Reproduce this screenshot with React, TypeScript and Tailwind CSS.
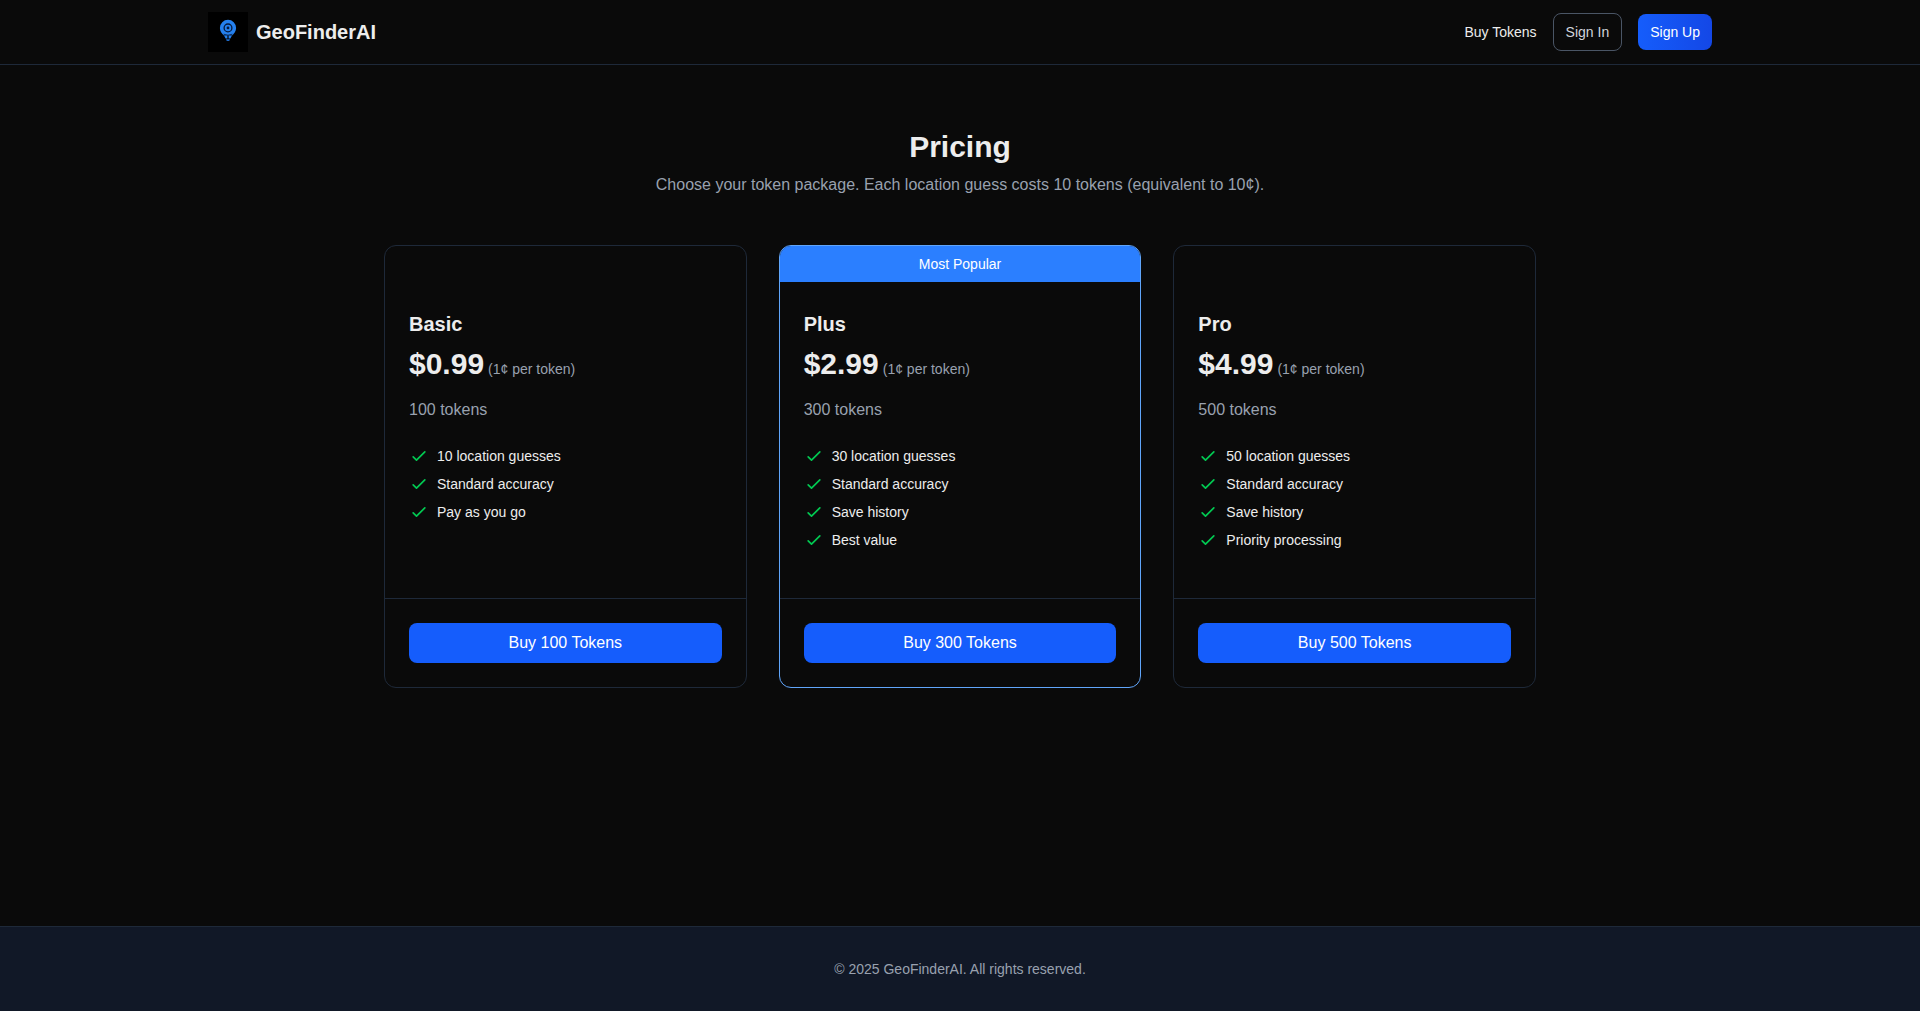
type Plan = {
  name: string;
  price: string;
  tokens: number;
  features: string[];
  popular?: boolean;
};

const plans: Plan[] = [
  {
    name: "Basic",
    price: "$0.99",
    tokens: 100,
    features: ["10 location guesses", "Standard accuracy", "Pay as you go"],
  },
  {
    name: "Plus",
    price: "$2.99",
    tokens: 300,
    features: ["30 location guesses", "Standard accuracy", "Save history", "Best value"],
    popular: true,
  },
  {
    name: "Pro",
    price: "$4.99",
    tokens: 500,
    features: ["50 location guesses", "Standard accuracy", "Save history", "Priority processing"],
  },
];

function Logo() {
  return (
    <svg viewBox="0 0 40 40" className="size-10 bg-black" aria-hidden="true">
      <path
        d="M20 7.8a8.1 8.1 0 0 0-8.1 8.1c0 3.4 2 5.4 3.6 7.3h9c1.6-1.9 3.6-3.9 3.6-7.3A8.1 8.1 0 0 0 20 7.8z"
        fill="#2480ee"
      />
      <circle cx="20" cy="15.9" r="3.9" fill="#2480ee" stroke="#06183a" strokeWidth="1.3" />
      <circle cx="20" cy="15.9" r="1.4" fill="#06183a" />
      <path d="M15.6 22.2q4.4 2 8.8 0" fill="none" stroke="#06183a" strokeWidth=".8" />
      <path d="M16 23.6h3.4v2.8h-1.8zM20.6 23.6H24l-1.6 2.8h-1.8z" fill="#2480ee" />
      <path d="M18 27.2h4l-.8 1.8h-2.4z" fill="#1e6bcb" />
    </svg>
  );
}

function CheckIcon() {
  return (
    <svg
      viewBox="0 0 24 24"
      fill="none"
      stroke="currentColor"
      strokeWidth="2"
      strokeLinecap="round"
      strokeLinejoin="round"
      className="size-5 shrink-0 text-green-500"
      aria-hidden="true"
    >
      <path d="M5 13l4 4L19 7" />
    </svg>
  );
}

function PlanCard({ plan }: { plan: Plan }) {
  return (
    <article
      className={
        plan.popular
          ? "relative flex flex-col overflow-hidden rounded-xl border border-[#60a5fa]"
          : "relative flex flex-col overflow-hidden rounded-xl border border-gray-800"
      }
    >
      {plan.popular && (
        <div className="absolute inset-x-0 top-0 bg-blue-500 py-2 text-center text-sm text-white">
          Most Popular
        </div>
      )}
      <div className="grow px-6 pt-16 pb-12">
        <h2 className="text-xl font-bold">{plan.name}</h2>
        <p className="mt-2 text-3xl font-bold">
          {plan.price}
          <span className="ml-1 text-sm font-normal text-gray-400">(1¢ per token)</span>
        </p>
        <p className="mt-4 text-gray-400">{plan.tokens} tokens</p>
        <ul className="mt-6 flex flex-col gap-2 text-sm">
          {plan.features.map((feature) => (
            <li key={feature} className="flex items-center gap-2">
              <CheckIcon />
              {feature}
            </li>
          ))}
        </ul>
      </div>
      <div className="border-t border-gray-800 p-6">
        <button type="button" className="h-10 w-full rounded-lg bg-blue-600 text-white">
          Buy {plan.tokens} Tokens
        </button>
      </div>
    </article>
  );
}

export default function App() {
  return (
    <div className="flex min-h-screen flex-col bg-[#0a0a0a] font-['Liberation_Sans',Arial,sans-serif] text-[#ededed]">
      <header className="border-b border-gray-800">
        <div className="mx-auto flex h-16 max-w-screen-2xl items-center justify-between px-4">
          <a href="#" className="flex items-center gap-2 text-xl font-bold">
            <Logo />
            GeoFinderAI
          </a>
          <nav className="flex items-center gap-4 text-sm">
            <a href="#">Buy Tokens</a>
            <button
              type="button"
              className="rounded-lg border border-gray-600 px-3 py-2 text-gray-300"
            >
              Sign In
            </button>
            <button
              type="button"
              className="rounded-lg bg-linear-to-r from-blue-600 to-blue-700 px-3 py-2 text-white"
            >
              Sign Up
            </button>
          </nav>
        </div>
      </header>

      <main className="mx-auto w-full max-w-6xl grow py-16">
        <div className="text-center">
          <h1 className="text-3xl font-bold">Pricing</h1>
          <p className="mt-2 text-gray-400">
            Choose your token package. Each location guess costs 10 tokens (equivalent to 10¢).
          </p>
        </div>
        <div className="mt-12 grid gap-8 md:grid-cols-3">
          {plans.map((plan) => (
            <PlanCard key={plan.name} plan={plan} />
          ))}
        </div>
      </main>

      <footer className="border-t border-gray-800 bg-[#111827] py-8 text-center text-sm text-gray-400">
        © 2025 GeoFinderAI. All rights reserved.
      </footer>
    </div>
  );
}
